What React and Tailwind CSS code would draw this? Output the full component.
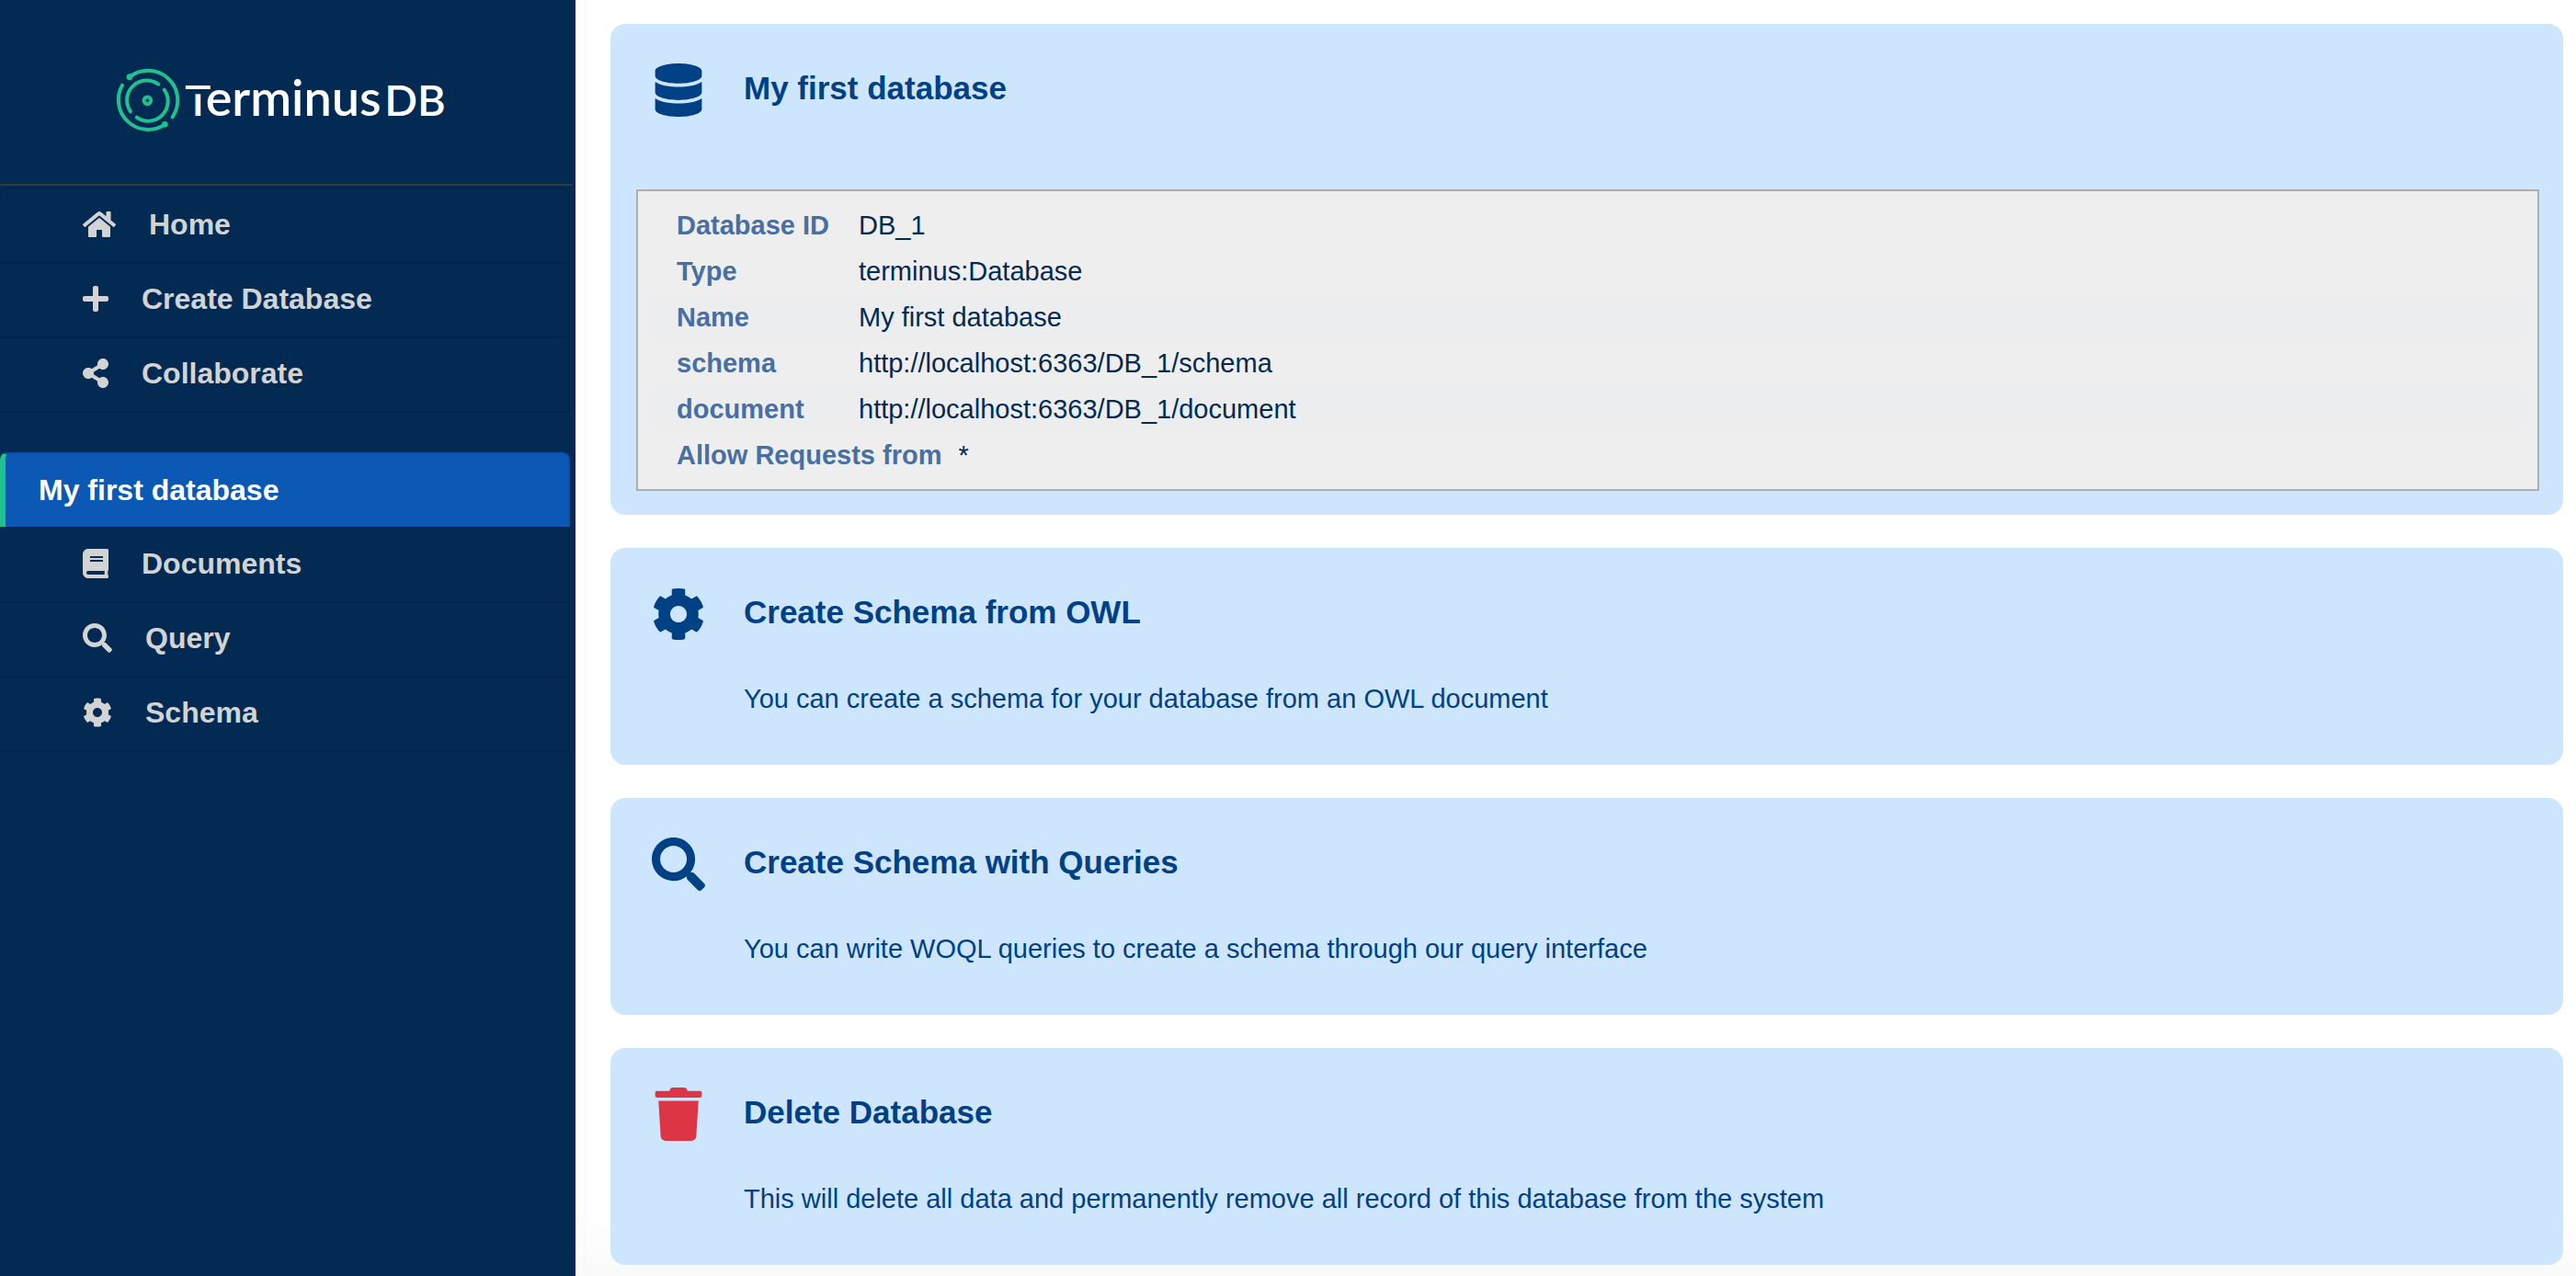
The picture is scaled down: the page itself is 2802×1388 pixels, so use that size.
import {
  FaBook,
  FaCog,
  FaDatabase,
  FaHome,
  FaPlus,
  FaSearch,
  FaShareAlt,
  FaTrash,
} from "react-icons/fa";

const mainLinks = [
  { label: "Home", Icon: FaHome, iconWidth: "w-9" },
  { label: "Create Database", Icon: FaPlus, iconWidth: "w-7" },
  { label: "Collaborate", Icon: FaShareAlt, iconWidth: "w-7" },
];

const databaseLinks = [
  { label: "Documents", Icon: FaBook, iconWidth: "w-7" },
  { label: "Query", Icon: FaSearch, iconWidth: "w-8" },
  { label: "Schema", Icon: FaCog, iconWidth: "w-8" },
];

const details = [
  ["Database ID", "DB_1"],
  ["Type", "terminus:Database"],
  ["Name", "My first database", true],
  ["schema", "http://localhost:6363/DB_1/schema"],
  ["document", "http://localhost:6363/DB_1/document", true],
  ["Allow Requests from", "*"],
];

const actions = [
  {
    title: "Create Schema from OWL",
    text: "You can create a schema for your database from an OWL document",
    Icon: FaCog,
  },
  {
    title: "Create Schema with Queries",
    text: "You can write WOQL queries to create a schema through our query interface",
    Icon: FaSearch,
  },
  {
    title: "Delete Database",
    text: "This will delete all data and permanently remove all record of this database from the system",
    Icon: FaTrash,
    danger: true,
  },
];

function Logo() {
  return (
    <svg viewBox="0 0 1140 300" className="h-[100px] w-[380px]" role="img" aria-label="TerminusDB">
      <g fill="none" stroke="#1fc18e" strokeWidth="12" strokeLinecap="round">
        <path d="M93 71A97 97 0 0 1 233 202" />
        <path d="M69 98A97 97 0 0 0 208 226" />
        <path d="M187 95A64.5 64.5 0 0 0 96 184" />
        <path d="M206 113A64.5 64.5 0 0 1 116 203" />
        <circle cx="151" cy="148" r="11.5" />
      </g>
      <circle cx="93" cy="71" r="10" fill="#1fc18e" />
      <circle cx="208" cy="226" r="10" fill="#1fc18e" />
      <g fill="#fff" fontFamily="Lato, sans-serif" fontWeight="600">
        <text x="274" y="198" fontSize="141">T</text>
        <rect x="274" y="111" width="82" height="16" fill="#022a53" />
        <text x="341" y="198" fontSize="162">erminus</text>
        <text x="925" y="198" fontSize="141">DB</text>
      </g>
    </svg>
  );
}

function NavList({ items, rounded }) {
  return (
    <ul>
      {items.map(({ label, Icon, iconWidth }) => (
        <li
          key={label}
          className={
            rounded
              ? "-mb-0.5 border-2 border-l-0 border-[#02244a] bg-[#022a53] first:rounded-t-lg"
              : "-mb-0.5 border-2 border-l-0 border-[#02244a] bg-[#022a53]"
          }
        >
          <a href="#" className="flex h-[79px] items-center gap-9 pb-1 pl-[90px]">
            <Icon className={`h-8 ${iconWidth}`} />
            {label}
          </a>
        </li>
      ))}
    </ul>
  );
}

function Card({ title, text, Icon, danger, children }) {
  return (
    <section className="rounded-2xl bg-[#cee5fe] pb-[26px] pl-7 pr-[26px] text-[#004085]">
      <div className="flex gap-[42px] pl-[17px] pt-[43px]">
        <Icon
          className={
            danger ? "h-[58px] w-[58px] shrink-0 text-[#dc3545]" : "h-[58px] w-[58px] shrink-0"
          }
        />
        <div>
          <h2 className="text-[35px] font-bold leading-[54px]">{title}</h2>
          {text && <p className="pb-[27px] pt-12 text-[29px] leading-[38px]">{text}</p>}
        </div>
      </div>
      {children}
    </section>
  );
}

export default function App() {
  return (
    <div className="flex min-h-screen bg-white font-['Liberation_Sans',Arial,sans-serif]">
      <aside className="w-[626px] shrink-0 bg-[#022a53] pr-1 text-[32px] font-bold text-[#d3d3d3]">
        <div className="border-b-2 border-[#343a40] pb-10 pl-[110px] pt-[60px]">
          <Logo />
        </div>
        <nav className="pr-0.5 pt-0.5">
          <NavList items={mainLinks} rounded />
          <a
            href="#"
            aria-current="page"
            className="-mb-0.5 mt-[45px] flex h-[83px] items-center rounded-t-lg border-2 border-l-[6px] border-[#0a50a5] border-l-[#1fc18e] bg-[#0b58b5] pb-0.5 pl-9 text-white"
          >
            My first database
          </a>
          <NavList items={databaseLinks} />
        </nav>
      </aside>

      <main className="flex min-w-0 flex-1 flex-col gap-9 bg-linear-to-t from-[#fafafa] to-white to-5% pb-3 pl-[38px] pr-3.5 pt-[26px]">
        <Card title="My first database" Icon={FaDatabase}>
          <dl className="mt-[79px] border-2 border-[#adadad] bg-[#eeeeee] px-3.5 py-3 text-[29px] leading-[50px] text-[#022a53]">
            {details.map(([label, value, striped]) => (
              <div
                key={label}
                className={striped ? "flex gap-[18px] bg-[#ebedef] pl-7" : "flex gap-[18px] pl-7"}
              >
                <dt className="min-w-[180px] font-bold text-[#486fa3]">{label}</dt>
                <dd>{value}</dd>
              </div>
            ))}
          </dl>
        </Card>
        {actions.map((action) => (
          <Card key={action.title} {...action} />
        ))}
      </main>
    </div>
  );
}
